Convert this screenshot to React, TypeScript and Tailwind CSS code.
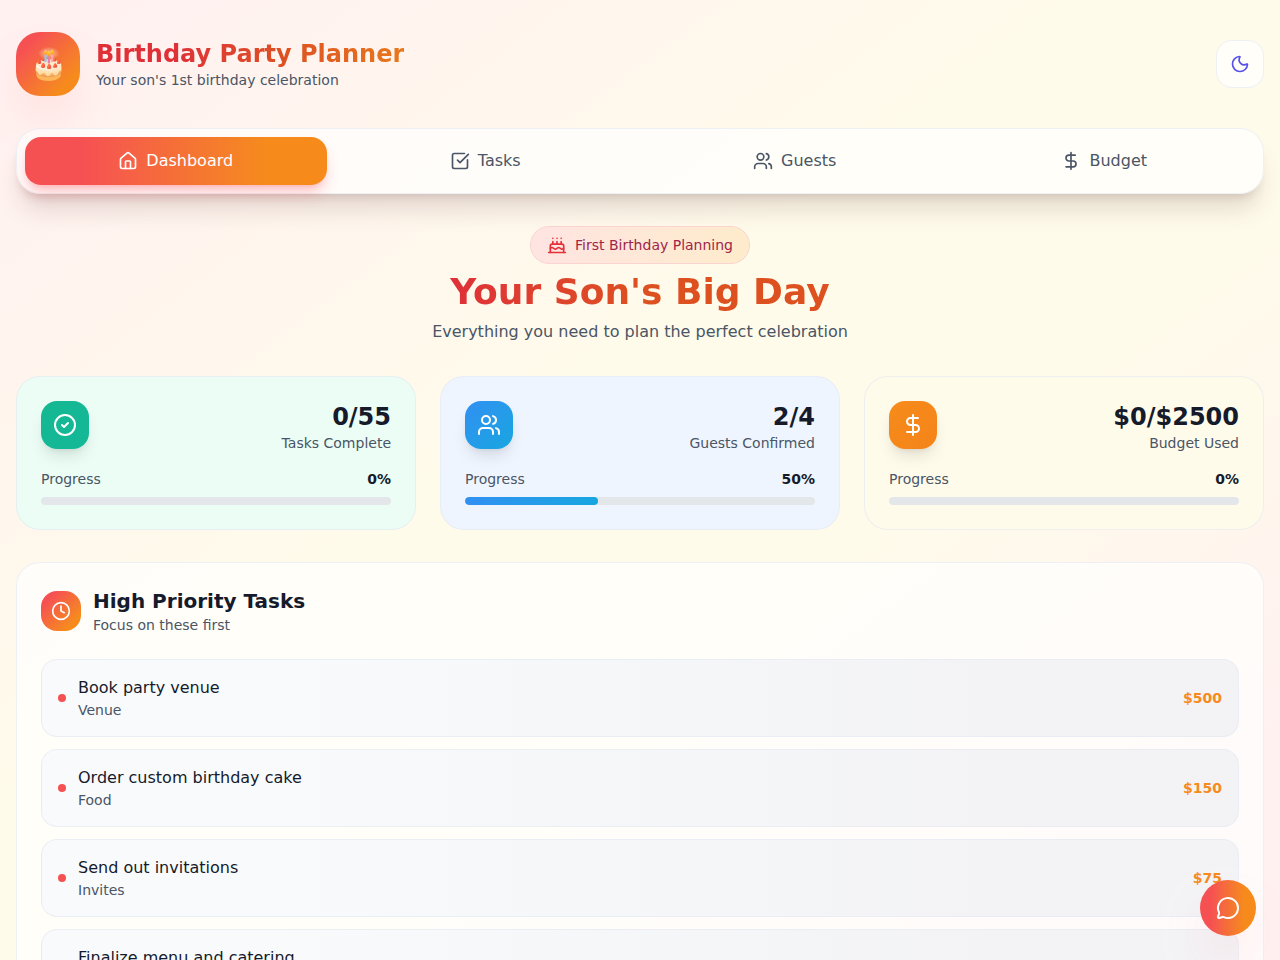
import {
  Cake,
  CircleCheck,
  Clock,
  DollarSign,
  House,
  MessageCircle,
  Moon,
  SquareCheckBig,
  Users,
  type LucideIcon,
} from 'lucide-react'
import { useState } from 'react'

const tabs: { name: string; icon: LucideIcon }[] = [
  { name: 'Dashboard', icon: House },
  { name: 'Tasks', icon: SquareCheckBig },
  { name: 'Guests', icon: Users },
  { name: 'Budget', icon: DollarSign },
]

const stats = [
  {
    value: '0/55',
    label: 'Tasks Complete',
    percent: '0%',
    bar: 0,
    icon: CircleCheck,
    card: 'bg-[#ebfdf5]',
    accent: 'from-[#14b892] to-[#14b898]',
  },
  {
    value: '2/4',
    label: 'Guests Confirmed',
    percent: '50%',
    bar: 38,
    icon: Users,
    card: 'bg-[#eff5ff]',
    accent: 'from-[#3090f2] to-[#16a6e0]',
  },
  {
    value: '$0/$2500',
    label: 'Budget Used',
    percent: '0%',
    bar: 0,
    icon: DollarSign,
    card: 'bg-[#fffbeb]',
    accent: 'from-[#f68b1b] to-[#f58419]',
  },
]

const tasks = [
  { title: 'Book party venue', category: 'Venue', cost: 500 },
  { title: 'Order custom birthday cake', category: 'Food', cost: 150 },
  { title: 'Send out invitations', category: 'Invites', cost: 75 },
  { title: 'Finalize menu and catering', category: 'Food', cost: 300 },
]

function Header() {
  return (
    <header className="flex items-center justify-between mb-8">
      <div className="flex items-center gap-4">
        <div className="flex size-16 items-center justify-center rounded-3xl bg-linear-to-br from-[#f65152] from-20% via-[#f56f36] to-[#f68b1b] to-80% shadow-2xl shadow-red-400/25">
          <span className="text-3xl">🎂</span>
        </div>
        <div>
          <h1 className="bg-linear-to-r from-[#df3038] from-25% via-[#dd4f22] via-60% to-[#e8781c] bg-clip-text text-2xl font-bold text-transparent">
            Birthday Party Planner
          </h1>
          <p className="text-sm text-gray-600">Your son's 1st birthday celebration</p>
        </div>
      </div>
      <button
        aria-label="Toggle dark mode"
        className="flex size-12 items-center justify-center rounded-2xl border border-slate-200/60 bg-white/70 text-[#5850ec]"
      >
        <Moon size={20} />
      </button>
    </header>
  )
}

function TabBar() {
  const [active, setActive] = useState('Dashboard')

  return (
    <nav className="mb-8 grid grid-cols-4 gap-2 rounded-3xl border border-slate-200/60 bg-white/70 p-2 shadow-xl shadow-[#4a2020]/15">
      {tabs.map(({ name, icon: Icon }) => (
        <button
          key={name}
          onClick={() => setActive(name)}
          className={
            'flex h-12 items-center justify-center gap-2 rounded-2xl font-medium ' +
            (active === name
              ? 'bg-linear-to-r from-[#f65152] from-20% via-[#f56f36] to-[#f68b1b] to-80% text-white shadow-lg shadow-red-500/25'
              : 'text-gray-600')
          }
        >
          <Icon size={20} />
          {name}
        </button>
      ))}
    </nav>
  )
}

function Hero() {
  return (
    <section className="mb-8 flex flex-col gap-2 text-center">
      <div className="flex items-center gap-2 self-center rounded-full border border-[#fbd3d0] bg-linear-to-r from-[#ffe4e2] to-[#feeccb] px-4 py-2 text-sm text-[#9f2549]">
        <Cake size={20} className="text-[#e5303a]" />
        First Birthday Planning
      </div>
      <h2 className="bg-linear-to-r from-[#df3038] from-35% to-[#dd5020] to-50% bg-clip-text text-4xl font-bold text-transparent">
        Your Son's Big Day
      </h2>
      <p className="text-gray-600">Everything you need to plan the perfect celebration</p>
    </section>
  )
}

function StatCard({ stat }: { stat: (typeof stats)[number] }) {
  const Icon = stat.icon

  return (
    <div className={`rounded-3xl border border-slate-200/60 p-6 ${stat.card}`}>
      <div className="mb-4 flex items-start justify-between">
        <div
          className={`flex size-12 items-center justify-center rounded-2xl bg-linear-to-br text-white shadow-lg ${stat.accent}`}
        >
          <Icon size={24} />
        </div>
        <div className="text-right">
          <div className="text-2xl font-bold">{stat.value}</div>
          <div className="text-sm text-gray-600">{stat.label}</div>
        </div>
      </div>
      <div className="mb-2 flex justify-between text-sm">
        <span className="text-gray-600">Progress</span>
        <span className="font-semibold">{stat.percent}</span>
      </div>
      <div className="h-2 overflow-hidden rounded-full bg-[#e4e7ea]">
        <div className={`h-full rounded-full bg-linear-to-r ${stat.accent}`} style={{ width: `${stat.bar}%` }} />
      </div>
    </div>
  )
}

function PriorityTasks() {
  return (
    <section className="rounded-3xl border border-slate-200/60 bg-white/70 p-6">
      <div className="mb-6 flex items-center gap-3">
        <div className="flex size-10 items-center justify-center rounded-2xl bg-linear-to-br from-[#f65152] from-20% via-[#f56f36] to-[#f68b1b] to-80% text-white">
          <Clock size={20} />
        </div>
        <div>
          <h3 className="text-xl font-bold">High Priority Tasks</h3>
          <p className="text-sm text-gray-600">Focus on these first</p>
        </div>
      </div>
      <ul className="space-y-3">
        {tasks.map((task) => (
          <li
            key={task.title}
            className="flex items-center gap-3 rounded-2xl border border-slate-200/60 bg-linear-to-r from-[#f8fafc] from-20% to-[#f3f3f6] to-80% p-4"
          >
            <span className="size-2 rounded-full bg-[#f65152]" />
            <div className="flex-1">
              <p className="font-medium">{task.title}</p>
              <p className="text-sm text-gray-600">{task.category}</p>
            </div>
            <span className="text-sm font-semibold text-[#f68b1b]">${task.cost}</span>
          </li>
        ))}
      </ul>
    </section>
  )
}

export default function App() {
  return (
    <div className="min-h-screen bg-[linear-gradient(to_bottom_right,#fff1f0_5%,#fffbeb_42%,#fffbeb_62%,#fff1f0_88%)] bg-fixed font-['DejaVu_Sans',sans-serif] text-[#151b2b]">
      <div className="mx-auto max-w-7xl px-4 py-8">
        <Header />
        <TabBar />
        <main>
          <Hero />
          <div className="mb-8 grid grid-cols-1 gap-6 md:grid-cols-3">
            {stats.map((stat) => (
              <StatCard key={stat.label} stat={stat} />
            ))}
          </div>
          <PriorityTasks />
        </main>
      </div>
      <button
        aria-label="Open chat"
        className="fixed right-6 bottom-6 flex size-14 items-center justify-center rounded-full bg-linear-to-r from-[#f65152] from-20% via-[#f56f36] to-[#f68b1b] to-80% text-white shadow-2xl shadow-red-400/25"
      >
        <MessageCircle size={24} />
      </button>
    </div>
  )
}
